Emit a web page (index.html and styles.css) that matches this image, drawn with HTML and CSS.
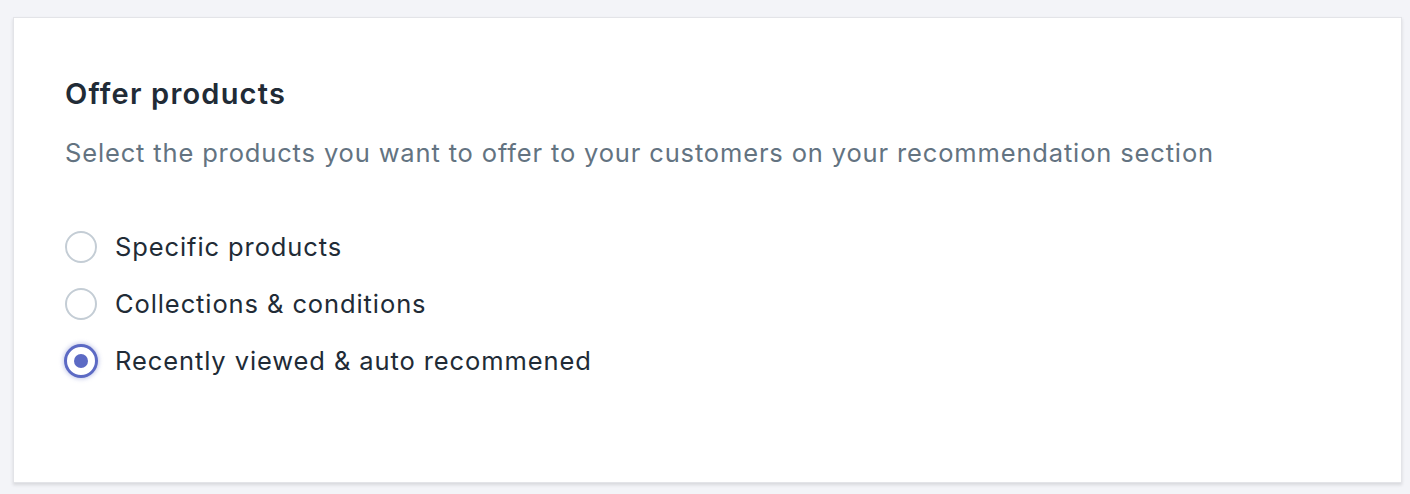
FILE: index.html
```html
<!DOCTYPE html>
<html lang="en">
<head>
<meta charset="utf-8">
<link rel="stylesheet" href="styles.css">
</head>
<body>
<div class="page">
  <section class="card">
    <h2 class="title">Offer products</h2>
    <p class="subtitle">Select the products you want to offer to your customers on your recommendation section</p>
    <div class="choices">
      <label class="choice"><span class="radio"></span><span class="label">Specific products</span></label>
      <label class="choice"><span class="radio"></span><span class="label">Collections &amp; conditions</span></label>
      <label class="choice"><span class="radio checked"></span><span class="label">Recently viewed &amp; auto recommened</span></label>
    </div>
  </section>
</div>
</body>
</html>
```
FILE: styles.css
```css
* { box-sizing: border-box; }
html, body { margin: 0; padding: 0; }
body {
  background: #f3f4f8;
  font-family: Inter, "Noto Sans", sans-serif;
  width: 1410px;
  height: 494px;
  overflow: hidden;
}
.page {
  padding: 17px 8px 0 13px;
}
.card {
  background: #ffffff;
  width: 1389px;
  height: 466px;
  border: 1px solid #e3e4e8;
  box-shadow: 0 2px 3px rgba(63, 63, 68, 0.15);
  padding: 58px 51px;
}
.title {
  margin: 0;
  font-size: 29px;
  line-height: 36px;
  font-weight: 600;
  color: #212b36;
  letter-spacing: 1.2px;
}
.subtitle {
  margin: 25px 0 0 0;
  font-size: 25.5px;
  line-height: 32px;
  color: #637381;
  letter-spacing: 0.85px;
}
.choices {
  margin-top: 62px;
  display: flex;
  flex-direction: column;
  gap: 25px;
}
.choice {
  display: flex;
  align-items: center;
  gap: 18px;
  height: 32px;
}
.radio {
  width: 32px;
  height: 32px;
  border-radius: 50%;
  border: 2px solid #c4cdd5;
  background: #fff;
  flex: none;
  position: relative;
}
.radio.checked {
  border-color: #5c6ac4;
  box-shadow: 0 0 0 1px #5c6ac4, 0 0 4px 2px rgba(92, 106, 196, 0.35);
}
.radio.checked::after {
  content: "";
  position: absolute;
  left: 50%;
  top: 50%;
  width: 14px;
  height: 14px;
  margin: -7px 0 0 -7px;
  border-radius: 50%;
  background: #5c6ac4;
}
.label {
  font-size: 25.5px;
  line-height: 32px;
  color: #212b36;
  letter-spacing: 0.9px;
}
```
